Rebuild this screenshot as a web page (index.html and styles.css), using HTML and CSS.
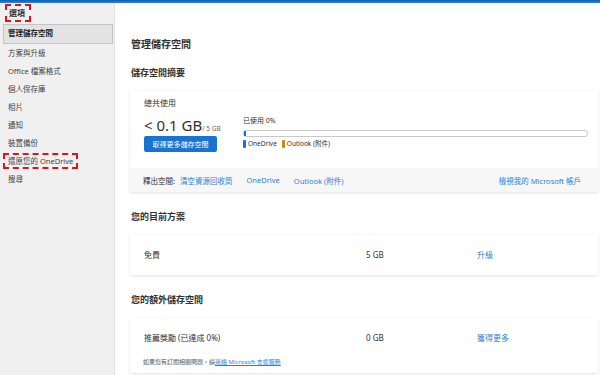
FILE: index.html
```html
<!DOCTYPE html>
<html lang="zh-Hant">
<head>
  <meta charset="UTF-8">
  <title>管理儲存空間</title>
  <link rel="stylesheet" href="styles.css">
</head>
<body>
  <div class="topbar"></div>
  <div class="app">
    <!-- 左側選單 -->
    <nav class="sidebar">
      <div class="side-title"><span class="mark">選項</span></div>
      <a class="side-item active">管理儲存空間</a>
      <a class="side-item">方案與升級</a>
      <a class="side-item">Office 檔案格式</a>
      <a class="side-item">個人保存庫</a>
      <a class="side-item">相片</a>
      <a class="side-item">通知</a>
      <a class="side-item">裝置備份</a>
      <a class="side-item"><span class="mark mark-item">還原您的 OneDrive</span></a>
      <a class="side-item">搜尋</a>
    </nav>

    <main class="content">
      <h1>管理儲存空間</h1>

      <h2>儲存空間摘要</h2>
      <div class="card">
        <div class="summary">
          <div class="total">
            <div class="label">總共使用</div>
            <div class="amount">&lt; 0.1 GB<small>/ 5 GB</small></div>
            <button class="btn">取得更多儲存空間</button>
          </div>
          <div class="usage">
            <div class="used">已使用 0%</div>
            <div class="bar"><div class="fill"></div></div>
            <div class="legend">
              <span class="dot dot-blue"></span>OneDrive
              <span class="dot dot-orange"></span>Outlook (附件)
            </div>
          </div>
        </div>
        <div class="card-foot">
          <span class="free">釋出空間:</span>
          <a class="link">清空資源回收筒</a>
          <a class="link">OneDrive</a>
          <a class="link">Outlook (附件)</a>
          <a class="link right">檢視我的 Microsoft 帳戶</a>
        </div>
      </div>

      <h2>您的目前方案</h2>
      <div class="card">
        <div class="row">
          <span>免費</span>
          <span>5 GB</span>
          <a class="link">升級</a>
        </div>
      </div>

      <h2>您的額外儲存空間</h2>
      <div class="card">
        <div class="row">
          <span>推薦獎勵 (已達成 0%)</span>
          <span>0 GB</span>
          <a class="link">獲得更多</a>
        </div>
        <p class="note">如果您有訂閱相關問題，請<a class="ulink">連絡 Microsoft 支援服務</a></p>
      </div>
    </main>
  </div>
</body>
</html>
```

FILE: styles.css
```css
body {
  margin: 0;
  height: 375px;
  overflow: hidden;
  font-family: "Noto Sans", "Noto Sans CJK TC", sans-serif;
  color: #323130;
  background-color: #fff;
}
.topbar {
  height: 3px;
  background: linear-gradient(#0b5cb0, #2a86da);
}
.app {
  display: flex;
  height: 372px;
}

/* 左側選單 */
.sidebar {
  width: 114px;
  flex: none;
  background-color: #f0f0f0;
  border-right: 1px solid #e2e2e2;
  font-size: 7.5px;
}
.side-title {
  height: 21px;
  padding: 1px 0 0 5px;
  box-sizing: border-box;
  font-weight: 600;
  font-size: 8px;
}
.mark {
  display: inline-block;
  border: 2px dashed #e8101a;
  padding: 0 4px 0 2px;
  line-height: 14px;
}
.side-item {
  display: block;
  height: 18px;
  line-height: 18px;
  margin-left: 3px;
  padding-left: 5px;
  color: #444;
}
.side-item.active {
  margin-right: 1px;
  padding-left: 4px;
  line-height: 16px;
  background-color: #e3e3e3;
  border: 1px solid #c4c4c4;
  color: #222;
  font-weight: 600;
}
.mark-item {
  margin-left: -5px;
  padding: 0 3px;
  line-height: 12px;
}

/* 主要內容 */
.content {
  flex: 1;
  padding: 0 2px 0 15px;
}
h1 {
  margin: 34px 0 0 1px;
  font-size: 10px;
  line-height: 14px;
  font-weight: 600;
}
h2 {
  margin: 18px 0 11px 1px;
  font-size: 9px;
  line-height: 14px;
  font-weight: 600;
}
h1 + h2 {
  margin-top: 15px;
}
.card {
  background-color: #fff;
  box-shadow: 0 1px 3px rgba(0,0,0,0.12);
  font-size: 8px;
}
.summary {
  display: flex;
  padding: 6px 10px 16px 14px;
}
.total {
  width: 99px;
}
.label {
  line-height: 12px;
}
.amount {
  margin-top: 7px;
  height: 18px;
  font-size: 15px;
  line-height: 18px;
}
.amount small {
  font-size: 6.5px;
  line-height: 1;
  color: #666;
}
.btn {
  display: block;
  margin-top: 2px;
  width: 73px;
  height: 16px;
  padding: 0;
  border: none;
  border-radius: 2px;
  background-color: #1874d2;
  color: #fff;
  font-family: inherit;
  font-size: 7px;
}
.usage {
  flex: 1;
  margin-top: 18px;
  font-size: 7px;
}
.used {
  line-height: 12px;
}
.bar {
  margin-top: 3px;
  height: 7px;
  border: 1px solid #c8c8c8;
  border-radius: 3px;
  box-sizing: border-box;
}
.fill {
  width: 2px;
  height: 100%;
  background-color: #1a6fe0;
}
.legend {
  display: flex;
  align-items: center;
  margin-top: 2px;
  line-height: 10px;
  font-size: 6.5px;
}
.dot {
  width: 3px;
  height: 8px;
  border-radius: 1px;
  margin-right: 2px;
}
.dot-blue {
  background-color: #1a6fe0;
}
.dot-orange {
  margin-left: 5px;
  background-color: #d08a00;
}
.card-foot {
  display: flex;
  align-items: center;
  height: 24px;
  padding: 0 17px 0 13px;
  background-color: #f7f7f7;
  font-size: 7.5px;
}
.free {
  margin-right: 5px;
}
.link {
  color: #2f7fd4;
  margin-right: 14px;
}
.link.right {
  margin: 0 0 0 auto;
}
.row {
  display: grid;
  grid-template-columns: 222px 111px 1fr;
  padding: 13px 14px;
  line-height: 14px;
}
.row .link {
  margin: 0;
}
.row + .note {
  margin-top: -13px;
}
.note {
  margin: 0;
  padding: 12px 13px 6px;
  font-size: 6px;
  line-height: 10px;
  color: #555;
}
.ulink {
  color: #2f7fd4;
  text-decoration: underline;
}
```
